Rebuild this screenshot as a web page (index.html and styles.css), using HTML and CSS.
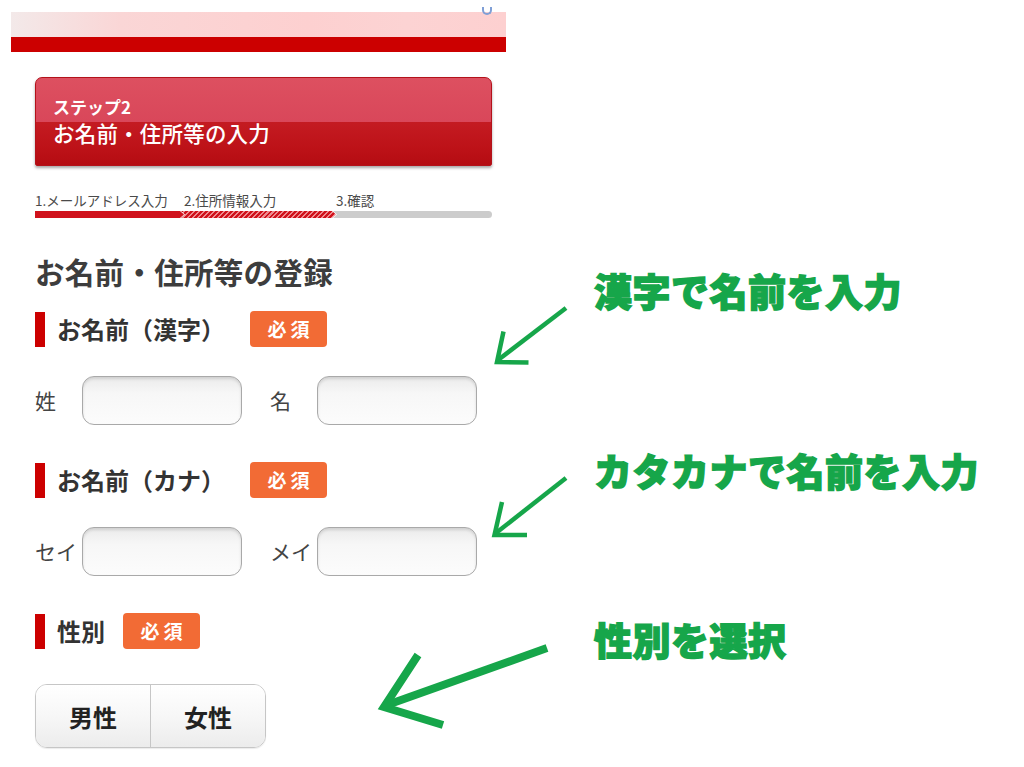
FILE: index.html
```html
<!DOCTYPE html>
<html lang="ja">
<head>
<meta charset="utf-8">
<title>お名前・住所等の入力</title>
<link rel="stylesheet" href="styles.css">
</head>
<body>
<div class="layout">
  <div class="phone">
    <div class="banner">
      <div class="banner-pink"><span class="banner-dot"></span></div>
      <div class="banner-red"></div>
    </div>
    <div class="main">
      <div class="step">
        <div class="step-sub">ステップ2</div>
        <div class="step-title">お名前・住所等の入力</div>
      </div>

      <div class="progress">
        <div class="progress-labels">
          <span class="p-label p1">1.メールアドレス入力</span>
          <span class="p-label p2">2.住所情報入力</span>
          <span class="p-label p3">3.確認</span>
        </div>
        <div class="progress-bar">
          <span class="seg seg-done p1"></span>
          <span class="seg seg-current p2"></span>
          <span class="seg seg-todo p3"></span>
        </div>
      </div>

      <h1 class="page-title">お名前・住所等の登録</h1>

      <div class="field-head">
        <span class="field-mark"></span>
        <span class="field-name">お名前（漢字）</span>
        <span class="badge badge-wide">必須</span>
      </div>
      <div class="input-row">
        <label class="in-label">姓</label><span class="input"></span>
        <label class="in-label gap">名</label><span class="input"></span>
      </div>

      <div class="field-head">
        <span class="field-mark"></span>
        <span class="field-name">お名前（カナ）</span>
        <span class="badge badge-wide">必須</span>
      </div>
      <div class="input-row">
        <label class="in-label">セイ</label><span class="input"></span>
        <label class="in-label gap">メイ</label><span class="input"></span>
      </div>

      <div class="field-head">
        <span class="field-mark"></span>
        <span class="field-name">性別</span>
        <span class="badge">必須</span>
      </div>
      <div class="gender">
        <span class="g-btn">男性</span>
        <span class="g-btn g-right">女性</span>
      </div>
    </div>
  </div>

  <div class="notes">
    <p class="note note1">漢字で名前を入力</p>
    <p class="note note2">カタカナで名前を入力</p>
    <p class="note note3">性別を選択</p>
  </div>
</div>

<svg class="arrows" width="1024" height="767" viewBox="0 0 1024 767" aria-hidden="true">
  <g fill="none" stroke="#16a64a" stroke-linecap="butt" stroke-linejoin="miter">
    <g stroke-width="4.5">
      <line x1="566" y1="308" x2="498" y2="360"/>
      <polyline points="503.5,331.5 497,362 528.5,362.5"/>
      <line x1="566" y1="478" x2="496" y2="533"/>
      <polyline points="502,502 494.5,535 527,535"/>
    </g>
    <g stroke-width="8">
      <line x1="547" y1="648" x2="387" y2="705"/>
      <polyline points="418,655 384,707 443,725"/>
    </g>
  </g>
</svg>
</body>
</html>
```

FILE: styles.css
```css
* { box-sizing: border-box; }

html, body {
  margin: 0;
  padding: 0;
  background: #ffffff;
}

body {
  width: 1024px;
  height: 767px;
  overflow: hidden;
  position: relative;
  font-family: "Noto Sans CJK JP", "Noto Sans", "DejaVu Sans", sans-serif;
  color: #333333;
}

.layout {
  display: flex;
  align-items: flex-start;
}

.phone {
  width: 512px;
  flex: 0 0 512px;
  padding-top: 12px;
}

/* top banner */
.banner {
  margin-left: 11px;
  width: 495px;
}
.banner-pink {
  height: 25px;
  background: linear-gradient(90deg, #f3e9e9 0%, #fad6d6 22%, #fdd0d0 60%, #fcd3d3 80%, #fdd0d0 100%);
  position: relative;
}
.banner-dot {
  position: absolute;
  right: 14px;
  top: -5px;
  width: 10px;
  height: 8px;
  border-radius: 0 0 6px 6px;
  border: 2px solid #7f9fd6;
  border-top: none;
}
.banner-red {
  height: 15px;
  background: #cc0000;
}

.main {
  padding-left: 35px;
  width: 492px;
}

/* step header */
.step {
  margin-top: 25px;
  height: 89px;
  border-radius: 7px 7px 2px 2px;
  border: 1px solid #b3121a;
  background: linear-gradient(180deg, #dd5060 0%, #d9475a 50%, #c41b22 50.5%, #bd1218 80%, #b40c12 100%);
  box-shadow: 0 2px 3px rgba(0, 0, 0, 0.35);
  padding: 19px 17px 0;
  color: #ffffff;
}
.step-sub {
  font-size: 17px;
  font-weight: 700;
  line-height: 20px;
}
.step-title {
  margin-top: 3px;
  font-size: 21.5px;
  font-weight: 500;
  line-height: 26px;
  letter-spacing: 0.2px;
}

/* progress */
.progress {
  margin-top: 26px;
  width: 457px;
}
.progress-labels,
.progress-bar {
  display: flex;
}
.p1 { flex: 0 0 149px; }
.p2 { flex: 0 0 152px; }
.p3 { flex: 1 1 auto; }
.p-label {
  font-size: 13.5px;
  line-height: 16px;
  color: #4a4a4a;
  white-space: nowrap;
}
.progress-bar {
  margin-top: 3px;
  height: 7px;
}
.seg {
  display: block;
  height: 7px;
}
.seg-done {
  background: #d0121c;
  clip-path: polygon(0 0, calc(100% - 4px) 0, 100% 50%, calc(100% - 4px) 100%, 0 100%);
}
.seg-current {
  margin-left: -3px;
  flex-basis: 155px;
  background: repeating-linear-gradient(135deg, #d0121c 0 2px, #ee8a8e 2px 3.5px);
  clip-path: polygon(0 0, calc(100% - 4px) 0, 100% 50%, calc(100% - 4px) 100%, 0 100%, 4px 50%);
}
.seg-todo {
  margin-left: -3px;
  background: #cccccc;
  border-radius: 0 4px 4px 0;
  clip-path: polygon(0 0, 100% 0, 100% 100%, 0 100%, 4px 50%);
}

/* page title */
.page-title {
  margin: 35px 0 0;
  font-size: 29.5px;
  font-weight: 700;
  line-height: 36px;
  color: #3d3d3d;
  letter-spacing: 0.3px;
}

/* field header */
.field-head {
  display: flex;
  align-items: center;
  height: 36px;
  margin-top: 22px;
}
.field-mark {
  width: 10px;
  height: 35px;
  background: #cc0000;
  margin-right: 12px;
}
.field-name {
  font-size: 24px;
  font-weight: 700;
  color: #333333;
  line-height: 36px;
}
.badge {
  margin-left: 18px;
  width: 77px;
  height: 36px;
  border-radius: 4px;
  background: #f26b35;
  color: #ffffff;
  font-size: 19px;
  font-weight: 700;
  line-height: 36px;
  text-align: center;
  letter-spacing: 4px;
  padding-left: 4px;
}
.badge-wide {
  margin-left: 25px;
}

/* inputs */
.input-row {
  display: flex;
  align-items: center;
  margin-top: 29px;
}
.input-row + .field-head {
  margin-top: 37px;
}
.in-label {
  width: 47px;
  font-size: 21px;
  color: #444444;
  line-height: 49px;
  white-space: nowrap;
}
.in-label.gap {
  margin-left: 28px;
}
.input {
  display: block;
  width: 160px;
  height: 49px;
  border: 1.5px solid #a9a9a9;
  border-radius: 12px;
  background: linear-gradient(180deg, #ebebeb 0%, #f7f7f7 35%, #fcfcfc 100%);
  box-shadow: inset 0 2px 3px rgba(0, 0, 0, 0.12);
}

/* gender */
.gender {
  margin-top: 35px;
  display: flex;
  width: 231px;
  height: 64px;
  border: 1px solid #c6c6c6;
  border-radius: 12px;
  overflow: hidden;
  box-shadow: 0 1px 1px rgba(0, 0, 0, 0.08);
}
.g-btn {
  flex: 1 1 0;
  display: flex;
  align-items: center;
  justify-content: center;
  background: linear-gradient(180deg, #ffffff 0%, #f7f7f7 50%, #ececec 100%);
  font-size: 24px;
  font-weight: 700;
  color: #222222;
}
.g-right {
  border-left: 1px solid #c6c6c6;
}

/* annotations */
.notes {
  flex: 1 1 auto;
  padding-left: 82px;
}
.note {
  margin: 0;
  font-size: 38px;
  font-weight: 900;
  line-height: 44px;
  color: #16a64a;
  white-space: nowrap;
  letter-spacing: 0.5px;
  -webkit-text-stroke: 1.4px #16a64a;
}
.note1 { margin-top: 268px; }
.note2 { margin-top: 136px; }
.note3 { margin-top: 125px; }

.arrows {
  position: absolute;
  left: 0;
  top: 0;
  pointer-events: none;
}
```
